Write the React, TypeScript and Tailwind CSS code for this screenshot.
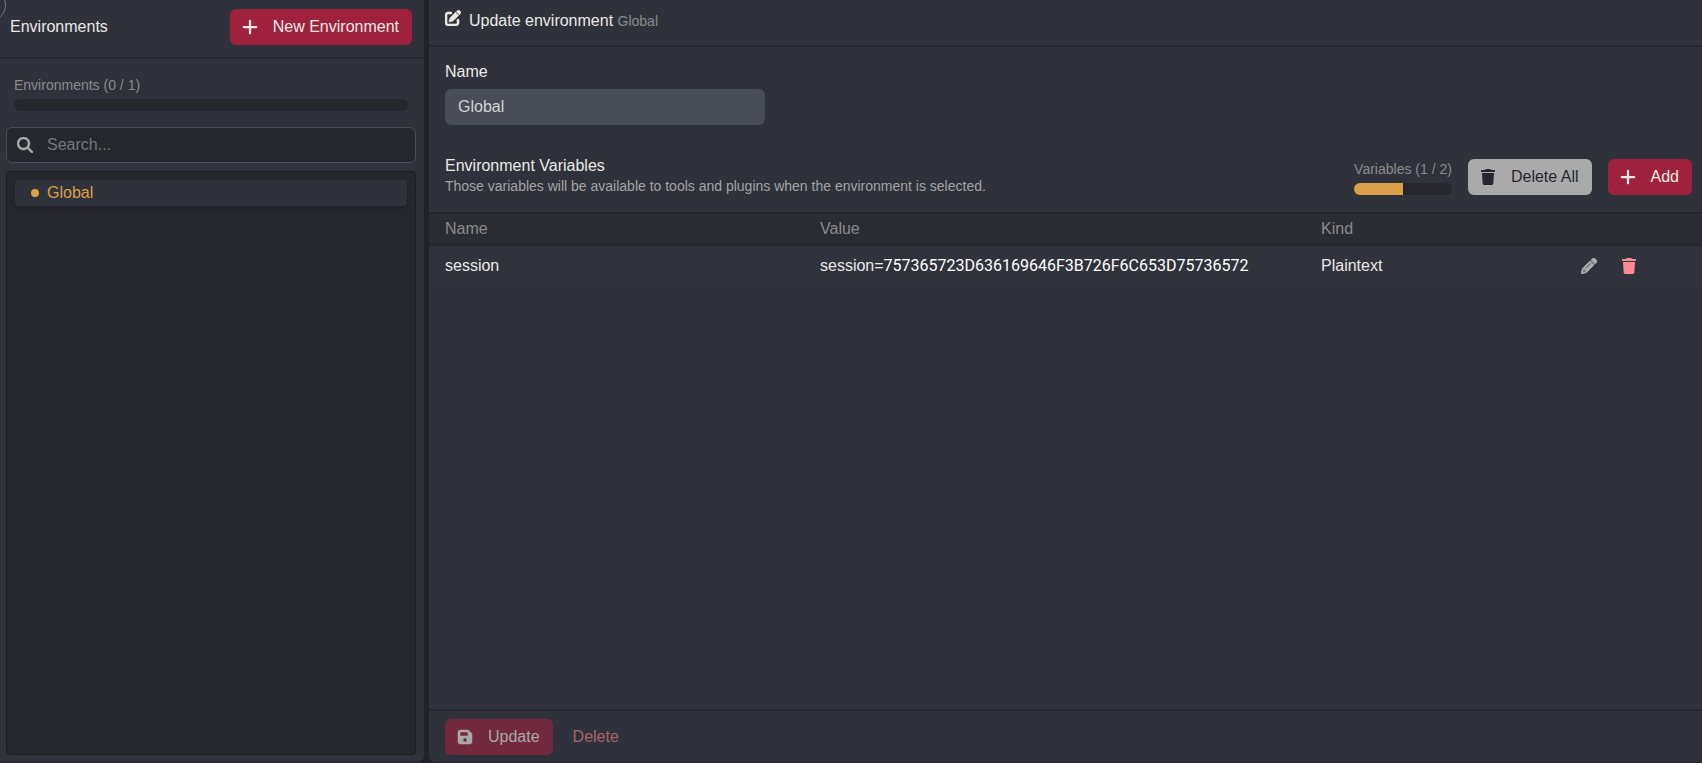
import React from "react";
import {
  FaFloppyDisk,
  FaMagnifyingGlass,
  FaPencil,
  FaPenToSquare,
  FaPlus,
  FaTrash,
} from "react-icons/fa6";

const variables = [
  {
    name: "session",
    prefix: "session=",
    value: "757365723D636169646F3B726F6C653D75736572",
    kind: "Plaintext",
  },
];

const Usage = ({ label, used, total }: { label: string; used: number; total: number }) => (
  <div className="text-sm text-[#8a8a8b]">
    <div>
      {label} ({used} / {total})
    </div>
    <div className="mt-1 h-3 overflow-hidden rounded-full bg-[#25272d]">
      <div className="h-full bg-[#dba149]" style={{ width: `${(used / total) * 100}%` }} />
    </div>
  </div>
);

const Sidebar = () => (
  <aside className="relative flex w-[424px] shrink-0 flex-col overflow-hidden rounded-br-md bg-[#2f323b]">
    <div className="absolute -left-7 -top-3 size-[34px] rounded-full border border-[#77797d]" />
    <div className="flex items-center justify-between border-b-2 border-[#25272d] pb-3 pl-2.5 pr-3 pt-[9px]">
      <h2>Environments</h2>
      <button className="flex h-9 items-center gap-3.5 rounded-md bg-[#a0213e] pl-[11px] pr-[13px]">
        <FaPlus className="size-[18px]" />
        New Environment
      </button>
    </div>
    <div className="py-4 pl-3.5 pr-4">
      <Usage label="Environments" used={0} total={1} />
    </div>
    <div className="flex flex-1 flex-col gap-2 pb-[7px] pl-1.5 pr-2">
      <label className="flex h-9 items-center gap-3.5 rounded-md border border-[#494d57] bg-[#25272d] px-2.5">
        <FaMagnifyingGlass className="size-4 shrink-0 text-[#aaaaab]" strokeWidth={16} />
        <input
          type="search"
          aria-label="Search"
          placeholder="Search..."
          className="w-full bg-transparent outline-none placeholder:text-[#77787b]"
        />
      </label>
      <div className="flex-1 rounded border border-[#1b1d21] bg-[#25272d] p-2">
        <button className="flex w-full items-center gap-2 rounded bg-[#2f323b] px-4 py-px text-[#dba149] shadow-md">
          <span className="size-2 rounded-full bg-[#dba149]" />
          Global
        </button>
      </div>
    </div>
  </aside>
);

const VariablesTable = () => (
  <table className="w-full table-fixed text-left">
    <thead className="border-y-2 border-[#25272d] bg-[#2a2c33] text-[#8a8a8b]">
      <tr className="h-8">
        <th className="w-[391px] pl-4 font-normal">Name</th>
        <th className="font-normal">Value</th>
        <th className="w-[260px] font-normal">Kind</th>
        <th className="w-[121px]" aria-label="Actions" />
      </tr>
    </thead>
    <tbody>
      {variables.map((variable) => (
        <tr key={variable.name} className="h-10 bg-[#30333c]">
          <td className="pl-4">{variable.name}</td>
          <td>
            {variable.prefix}
            <span className="font-[Roboto,sans-serif] text-white">{variable.value}</span>
          </td>
          <td>{variable.kind}</td>
          <td>
            <div className="flex gap-6">
              <button aria-label="Edit variable" className="text-[#aaaaab]">
                <FaPencil className="size-4" strokeWidth={20} />
              </button>
              <button aria-label="Delete variable" className="text-[#fb8a93]">
                <FaTrash className="size-4" />
              </button>
            </div>
          </td>
        </tr>
      ))}
    </tbody>
  </table>
);

const App = () => {
  return (
    <div className="flex h-screen gap-[5px] bg-[#212227] pb-px font-['Liberation_Sans',Arial,sans-serif] text-base text-[#ebe9e6]">
      <Sidebar />
      <main className="flex min-w-0 flex-1 flex-col overflow-hidden rounded-bl-md bg-[#2f323b]">
        <header className="flex items-baseline gap-2 border-b-2 border-[#25272d] px-4 pb-3 pt-[9px]">
          <FaPenToSquare className="size-4" strokeWidth={20} />
          <h1>
            Update environment <span className="text-sm/4 text-[#8a8a8b]">Global</span>
          </h1>
        </header>
        <div className="flex flex-col items-start gap-[5px] px-4 pt-[13px]">
          <label htmlFor="name">Name</label>
          <input
            id="name"
            defaultValue="Global"
            className="h-9 w-80 rounded-md bg-[#494d57] px-[13px] text-[#d3d3d3] outline-none"
          />
        </div>
        <section className="flex flex-1 flex-col pt-[31px]">
          <div className="flex items-center gap-4 pb-3.5 pl-4 pr-2.5">
            <div className="flex-1 pb-0.5">
              <h2 className="leading-5">Environment Variables</h2>
              <p className="text-sm text-[#a3a3a4]">
                Those variables will be available to tools and plugins when the environment is
                selected.
              </p>
            </div>
            <Usage label="Variables" used={1} total={2} />
            <button className="flex h-9 items-center gap-[15px] rounded-md bg-[#aaaaaa] pl-3 pr-[13px] text-[#25272d]">
              <FaTrash className="size-4" />
              Delete All
            </button>
            <button className="flex h-9 items-center gap-3.5 rounded-md bg-[#a0213e] pl-[11px] pr-[13px]">
              <FaPlus className="size-[18px]" />
              Add
            </button>
          </div>
          <VariablesTable />
        </section>
        <footer className="flex items-center gap-5 border-t-2 border-[#25272d] px-4 pb-[7px] pt-2">
          <button className="flex h-9 items-center gap-[15px] rounded-md bg-[#72283d] pl-3 pr-[13px] text-[#aaa8a8]">
            <FaFloppyDisk className="size-4" strokeWidth={16} />
            Update
          </button>
          <button className="text-[#a5656d]">Delete</button>
        </footer>
      </main>
    </div>
  );
};

export default App;
